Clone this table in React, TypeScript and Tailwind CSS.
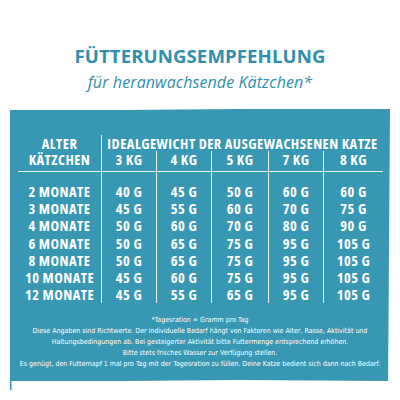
import React from "react";

const rows: [string, string[]][] = [
  ["2 MONATE", ["40 G", "45 G", "50 G", "60 G", "60 G"]],
  ["3 MONATE", ["45 G", "55 G", "60 G", "70 G", "75 G"]],
  ["4 MONATE", ["50 G", "60 G", "70 G", "80 G", "90 G"]],
  ["6 MONATE", ["50 G", "65 G", "75 G", "95 G", "105 G"]],
  ["8 MONATE", ["50 G", "65 G", "75 G", "95 G", "105 G"]],
  ["10 MONATE", ["45 G", "60 G", "75 G", "95 G", "105 G"]],
  ["12 MONATE", ["45 G", "55 G", "65 G", "95 G", "105 G"]],
];

const kg = ["3 KG", "4 KG", "5 KG", "7 KG", "8 KG"];

const cond = { fontFamily: '"Open Sans", sans-serif', fontStretch: "87.5%" };

export default function App() {
  return (
    <div className="w-[400px] h-[400px] bg-white flex flex-col items-center overflow-hidden">
      <div
        className="mt-[46px] text-[18.6px] leading-[20px] font-bold text-[#2e8fae] tracking-[0.1px] whitespace-nowrap"
        style={{ fontFamily: '"Open Sans", sans-serif' }}
      >
        FÜTTERUNGSEMPFEHLUNG
      </div>
      <div
        className="mt-[7px] text-[16px] leading-[18px] italic font-medium text-[#2e8fae] tracking-[0.1px] whitespace-nowrap"
        style={{ fontFamily: '"Open Sans", sans-serif' }}
      >
        für heranwachsende Kätzchen*
      </div>
      <div
        className="mt-[18px] w-[380px] h-[282px] bg-[#3898b3] flex flex-col items-start pl-[8px] pt-[26px] text-white"
        style={{
          clipPath:
            "polygon(0 1px, 30% 1px, 60% 0, 100% 0, 99.5% 272px, 60% 271px, 30% 272px, 1.5px 272px, 1.5px 281px, 0 281px)",
        }}
      >
        <div
          className="grid grid-cols-[83px_55px_55px_57px_55px_60px] font-bold text-[14.5px] leading-[13px] tracking-[0.45px]"
          style={cond}
        >
          {/* header row 1 */}
          <div className="h-[16px] flex items-center justify-center whitespace-nowrap">ALTER</div>
          <div className="col-span-5 h-[16px] flex items-center justify-center border-l-[1.5px] border-white/90 whitespace-nowrap">
            IDEALGEWICHT DER AUSGEWACHSENEN KATZE
          </div>
          {/* header row 2 */}
          <div className="h-[21px] pt-[1.5px] flex items-start justify-center border-b-[1.5px] border-white/90 whitespace-nowrap">
            KÄTZCHEN
          </div>
          {kg.map((k) => (
            <div
              key={k}
              className="h-[21px] pt-[1.5px] flex items-start justify-center border-l-[1.5px] border-b-[1.5px] border-white/90 whitespace-nowrap"
            >
              {k}
            </div>
          ))}
          {/* spacer */}
          <div className="h-[11px]" />
          {kg.map((k) => (
            <div key={"s" + k} className="h-[11px] border-l-[1.5px] border-white/90" />
          ))}
          {rows.map(([age, vals]) => (
            <React.Fragment key={age}>
              <div className="h-[17.2px] flex items-center justify-center whitespace-nowrap">{age}</div>
              {vals.map((v, i) => (
                <div
                  key={i}
                  className="h-[17.2px] flex items-center justify-center border-l-[1.5px] border-white/90 whitespace-nowrap"
                >
                  {v}
                </div>
              ))}
            </React.Fragment>
          ))}
        </div>
        <div
          className="w-[364px] mt-[12px] flex flex-col items-center text-[7px] leading-[10.8px] text-white"
          style={{ fontFamily: '"DejaVu Sans Condensed", sans-serif' }}
        >
          <div className="whitespace-nowrap">*Tagesration = Gramm pro Tag</div>
          <div className="whitespace-nowrap">
            Diese Angaben sind Richtwerte. Der individuelle Bedarf hängt von Faktoren wie Alter, Rasse, Aktivität und
          </div>
          <div className="whitespace-nowrap">
            Haltungsbedingungen ab. Bei gesteigerter Aktivität bitte Futtermenge entsprechend erhöhen.
          </div>
          <div className="whitespace-nowrap">Bitte stets frisches Wasser zur Verfügung stellen.</div>
          <div className="whitespace-nowrap">
            Es genügt, den Futternapf 1 mal pro Tag mit der Tagesration zu füllen. Deine Katze bedient sich dann nach Bedarf.
          </div>
        </div>
      </div>
    </div>
  );
}
